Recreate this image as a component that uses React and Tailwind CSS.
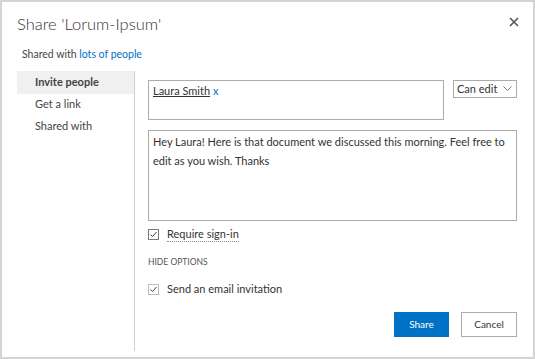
import { useState } from 'react';

const font = { fontFamily: 'Lato, "Open Sans", sans-serif' };

const CheckBox = ({ dotted }) => (
  <svg width="11" height="11" viewBox="0 0 11 11" className="shrink-0">
    <rect
      x="0.5"
      y="0.5"
      width="10"
      height="10"
      fill="white"
      stroke="#7a7a7a"
      strokeDasharray={dotted ? '1 1' : undefined}
    />
    <path d="M2.5 5.5 L4.5 7.5 L8.5 3" fill="none" stroke="#444" strokeWidth="1" />
  </svg>
);

const App = () => {
  const [tab, setTab] = useState('invite');
  const [message, setMessage] = useState(
    'Hey Laura! Here is that document we discussed this morning. Feel free to edit as you wish. Thanks'
  );

  const navItems = [
    { id: 'invite', label: 'Invite people' },
    { id: 'link', label: 'Get a link' },
    { id: 'shared', label: 'Shared with' },
  ];

  return (
    <div
      className="w-[535px] h-[359px] bg-white border-2 border-[#d4d4d4] flex flex-col text-[#333] overflow-hidden"
      style={font}
    >
      {/* Header */}
      <div className="flex justify-between items-start pl-[15px] pr-[14px] pt-[10px]">
        <h1 className="text-[16.5px] font-light leading-[24px] text-[#333]">Share 'Lorum-Ipsum'</h1>
        <button className="mt-[5px] text-[#555]">
          <svg width="10" height="10" viewBox="0 0 10 10">
            <path d="M1 1 L9 9 M9 1 L1 9" stroke="#555" strokeWidth="1.6" />
          </svg>
        </button>
      </div>
      <div className="pl-[20px] pt-[11px] text-[10.5px] leading-[14px] text-[#444]">
        Shared with <a className="text-[#0072c6]">lots of people</a>
      </div>

      {/* Body */}
      <div className="flex mt-[10px] pl-[15px] h-[280px]">
        {/* Nav */}
        <div className="w-[118px] shrink-0 border-r border-[#d0d0d0]">
          {navItems.map((item) => (
            <div
              key={item.id}
              onClick={() => setTab(item.id)}
              className={`pl-[18px] h-[23px] mb-[-1px] flex items-center text-[11px] cursor-pointer ${
                tab === item.id ? 'bg-[#f0f0f0] font-bold text-[#444]' : 'text-[#444]'
              }`}
            >
              {item.label}
            </div>
          ))}
        </div>

        {/* Content */}
        <div className="flex-1 pl-[13px] pr-[16px] pt-[9px] flex flex-col">
          <div className="flex gap-[9px] items-start">
            <div className="w-[296px] h-[40px] border border-[#ababab] px-[4px] pt-[2px] text-[11px] leading-[16px]">
              <span className="underline text-[#333]">Laura Smith</span>{' '}
              <span className="text-[#0072c6]">x</span>
            </div>
            <div className="w-[64px] h-[18px] border border-[#ababab] flex items-center justify-between pl-[3px] pr-[4px] text-[11px] whitespace-nowrap">
              <span>Can edit</span>
              <svg width="9" height="6" viewBox="0 0 9 6">
                <path d="M0.5 0.5 L4.5 4.5 L8.5 0.5" fill="none" stroke="#777" />
              </svg>
            </div>
          </div>

          <textarea
            value={message}
            onChange={(e) => setMessage(e.target.value)}
            className="mt-[10px] w-[369px] h-[91px] border border-[#ababab] px-[4px] py-[1px] text-[11px] leading-[19px] text-[#333] resize-none outline-none"
          />

          <div className="mt-[6px] flex items-center gap-[8px] h-[14px]">
            <CheckBox />
            <span className="text-[11px] border-b border-dotted border-[#888] leading-[15px]">Require sign-in</span>
          </div>

          <div className="mt-[15px] text-[8.5px] text-[#555] leading-[12px]">HIDE OPTIONS</div>

          <div className="mt-[14px] flex items-center gap-[8px] h-[14px]">
            <CheckBox dotted />
            <span className="text-[11px]">Send an email invitation</span>
          </div>

          <div className="mt-[16px] flex justify-end gap-[12px]">
            <button className="w-[55px] h-[25px] bg-[#0072c6] text-white text-[10px]">Share</button>
            <button className="w-[56px] h-[25px] bg-white border border-[#ababab] text-[#333] text-[10px]">
              Cancel
            </button>
          </div>
        </div>
      </div>
    </div>
  );
};

export default App;
